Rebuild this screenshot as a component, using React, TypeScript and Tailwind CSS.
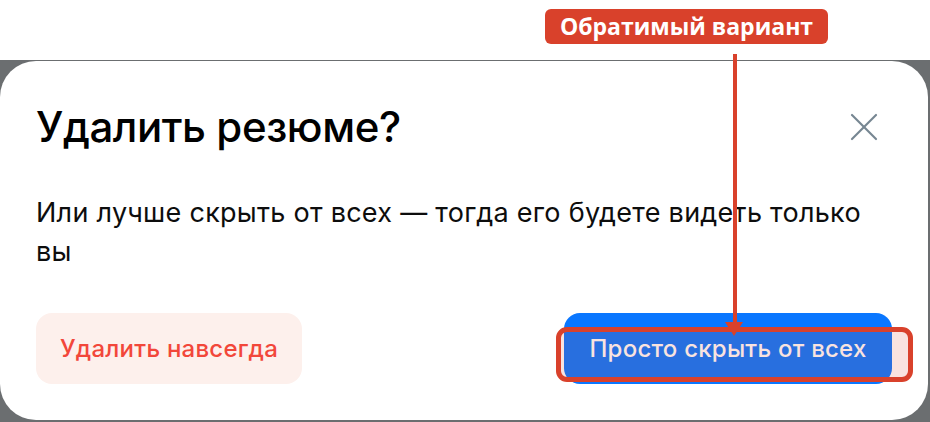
import { X } from "lucide-react";

export default function App() {
  return (
    <div className="relative flex h-[422px] w-[930px] flex-col overflow-hidden bg-white font-['Inter',sans-serif]">
      {/* white band above the dimmed page */}
      <div className="h-[60px] shrink-0 bg-white" />

      {/* dimmed backdrop with the dialog */}
      <div className="flex flex-1 flex-col bg-[#6b6e70] pt-px pb-[2px] pr-[2px]">
        <div className="flex flex-1 flex-col rounded-[36px] bg-white px-[36px] pt-[40px]">
          <div className="flex items-start justify-between">
            <h2 className="text-[42px] leading-[52px] font-medium tracking-[-0.01em] text-black">
              Удалить резюме?
            </h2>
            <button className="mt-[2px] mr-[4px] flex h-[48px] w-[48px] items-center justify-center text-[#768692]">
              <X size={48} strokeWidth={1.1} />
            </button>
          </div>

          <p className="mt-[40px] text-[27px] leading-[39px] tracking-[0.01em] text-[#0d0d0d]">
            Или лучше скрыть от всех — тогда его будете видеть только вы
          </p>

          <div className="mt-[42px] flex items-center justify-between">
            <button className="flex h-[71px] items-center rounded-[16px] bg-[#fdf0ec] px-[24px] text-[24px] font-medium tracking-[0.01em] text-[#f2473a]">
              Удалить навсегда
            </button>
            <button className="flex h-[71px] w-[328px] items-center justify-center rounded-[16px] bg-[#0a77ff] text-[24px] font-medium tracking-[0.01em] text-white">
              Просто скрыть от всех
            </button>
          </div>
        </div>
      </div>

      {/* annotation overlay */}
      <div className="absolute left-[545px] top-[9px] flex h-[35px] w-[283px] items-center justify-center rounded-[6px] bg-[#d9412b] font-['Open_Sans',sans-serif] text-[23px] font-bold text-white">
        Обратимый вариант
      </div>
      <div className="absolute left-[733px] top-[54px] h-[272px] w-[4px] bg-[#d9412b]" />
      <svg className="absolute left-[725px] top-[322px]" width="18" height="14" viewBox="0 0 18 14">
        <polygon points="0,0 18,0 9,14" fill="#d9412b" />
      </svg>
      <div className="absolute left-[556px] top-[327px] h-[55px] w-[357px] rounded-[11px] border-[5px] border-[#d9412b] bg-[#d9412b]/15" />
    </div>
  );
}
